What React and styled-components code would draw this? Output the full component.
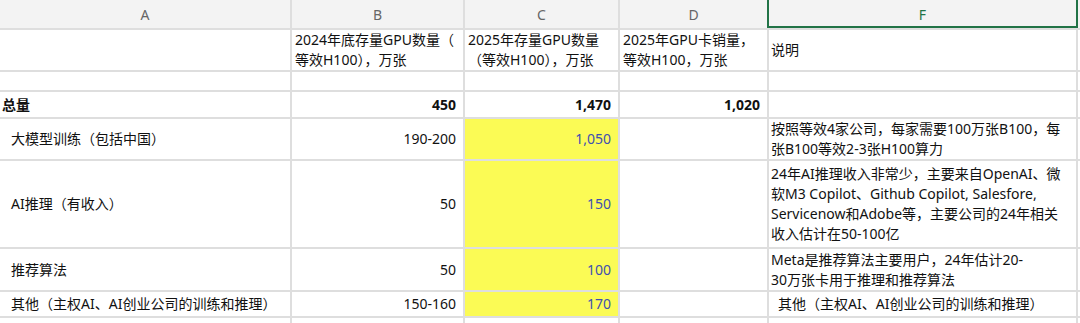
import React from 'react';
import styled, { createGlobalStyle } from 'styled-components';

const GlobalStyle = createGlobalStyle`
  html, body {
    margin: 0;
    padding: 0;
    background: #fff;
  }
  body {
    font-family: "Noto Sans", "Noto Sans CJK SC", sans-serif;
  }
`;

const Sheet = styled.div`
  display: grid;
  grid-template-columns: 290px 171px 153px 147px 307px 1fr;
  grid-template-rows: 28px 40px 18px 25px 40px 86px 41px 24px 1fr;
  gap: 2px;
  width: 1080px;
  height: 323px;
  overflow: hidden;
  background: #dedede;
`;

const HeaderCell = styled.div`
  display: flex;
  align-items: center;
  justify-content: center;
  background: #f3f3f3;
  color: ${p => (p.$selected ? '#217346' : '#666')};
  font-size: 14px;
  box-shadow: ${p =>
    p.$selected
      ? '-2px 0 0 #217346, 2px 0 0 #217346, inset 0 -2px 0 #217346'
      : 'none'};
`;

const Cell = styled.div`
  display: flex;
  flex-direction: column;
  justify-content: center;
  align-items: ${p => (p.$align === 'right' ? 'flex-end' : 'flex-start')};
  padding: ${p => (p.$align === 'right' ? '0 7px 0 0' : `0 0 0 ${p.$indent || 2}px`)};
  background: ${p => (p.$fill ? '#fbfb55' : '#fff')};
  color: ${p => (p.$blue ? '#3f4fb0' : '#111')};
  font-size: 14px;
  line-height: 20px;
  font-weight: ${p => (p.$bold ? 700 : 400)};
  white-space: nowrap;
  overflow: hidden;
`;

const rows = [
  {
    a: '',
    b: ['2024年底存量GPU数量（', '等效H100），万张'],
    c: ['2025年存量GPU数量', '（等效H100），万张'],
    d: ['2025年GPU卡销量，', '等效H100，万张'],
    f: ['说明'],
    head: true,
  },
  { a: '', b: '', c: '', d: '', f: [''] },
  { a: '总量', b: '450', c: '1,470', d: '1,020', f: [''], bold: true },
  {
    a: '大模型训练（包括中国）',
    b: '190-200',
    c: '1,050',
    d: '',
    f: ['按照等效4家公司，每家需要100万张B100，每', '张B100等效2-3张H100算力'],
    indent: true,
  },
  {
    a: 'AI推理（有收入）',
    b: '50',
    c: '150',
    d: '',
    f: [
      '24年AI推理收入非常少，主要来自OpenAI、微',
      '软M3 Copilot、Github Copilot, Salesfore,',
      'Servicenow和Adobe等，主要公司的24年相关',
      '收入估计在50-100亿',
    ],
    indent: true,
  },
  {
    a: '推荐算法',
    b: '50',
    c: '100',
    d: '',
    f: ['Meta是推荐算法主要用户，24年估计20-', '30万张卡用于推理和推荐算法'],
    indent: true,
  },
  {
    a: '其他（主权AI、AI创业公司的训练和推理）',
    b: '150-160',
    c: '170',
    d: '',
    f: ['其他（主权AI、AI创业公司的训练和推理）'],
    indent: true,
    fIndent: 9,
  },
  { a: '', b: '', c: '', d: '', f: [''] },
];

const Lines = ({ value }) =>
  (Array.isArray(value) ? value : [value]).map((line, i) => <span key={i}>{line}</span>);

export default function App() {
  return (
    <>
      <GlobalStyle />
      <Sheet>
        <HeaderCell>A</HeaderCell>
        <HeaderCell>B</HeaderCell>
        <HeaderCell>C</HeaderCell>
        <HeaderCell>D</HeaderCell>
        <HeaderCell $selected>F</HeaderCell>
        <HeaderCell />

        {rows.map((r, i) => {
          const yellow = i >= 3 && i <= 6;
          return (
            <React.Fragment key={i}>
              <Cell $bold={r.bold} $indent={r.indent ? 11 : 2}>{r.a}</Cell>
              <Cell $align={r.head ? 'left' : 'right'} $bold={r.bold} $indent={3}>
                <Lines value={r.b} />
              </Cell>
              <Cell
                $align={r.head ? 'left' : 'right'}
                $bold={r.bold}
                $indent={3}
                $fill={yellow}
                $blue={yellow}
              >
                <Lines value={r.c} />
              </Cell>
              <Cell $align={r.head ? 'left' : 'right'} $bold={r.bold} $indent={3}>
                <Lines value={r.d} />
              </Cell>
              <Cell $indent={r.fIndent || 2}>
                <Lines value={r.f} />
              </Cell>
              <Cell />
            </React.Fragment>
          );
        })}
      </Sheet>
    </>
  );
}
